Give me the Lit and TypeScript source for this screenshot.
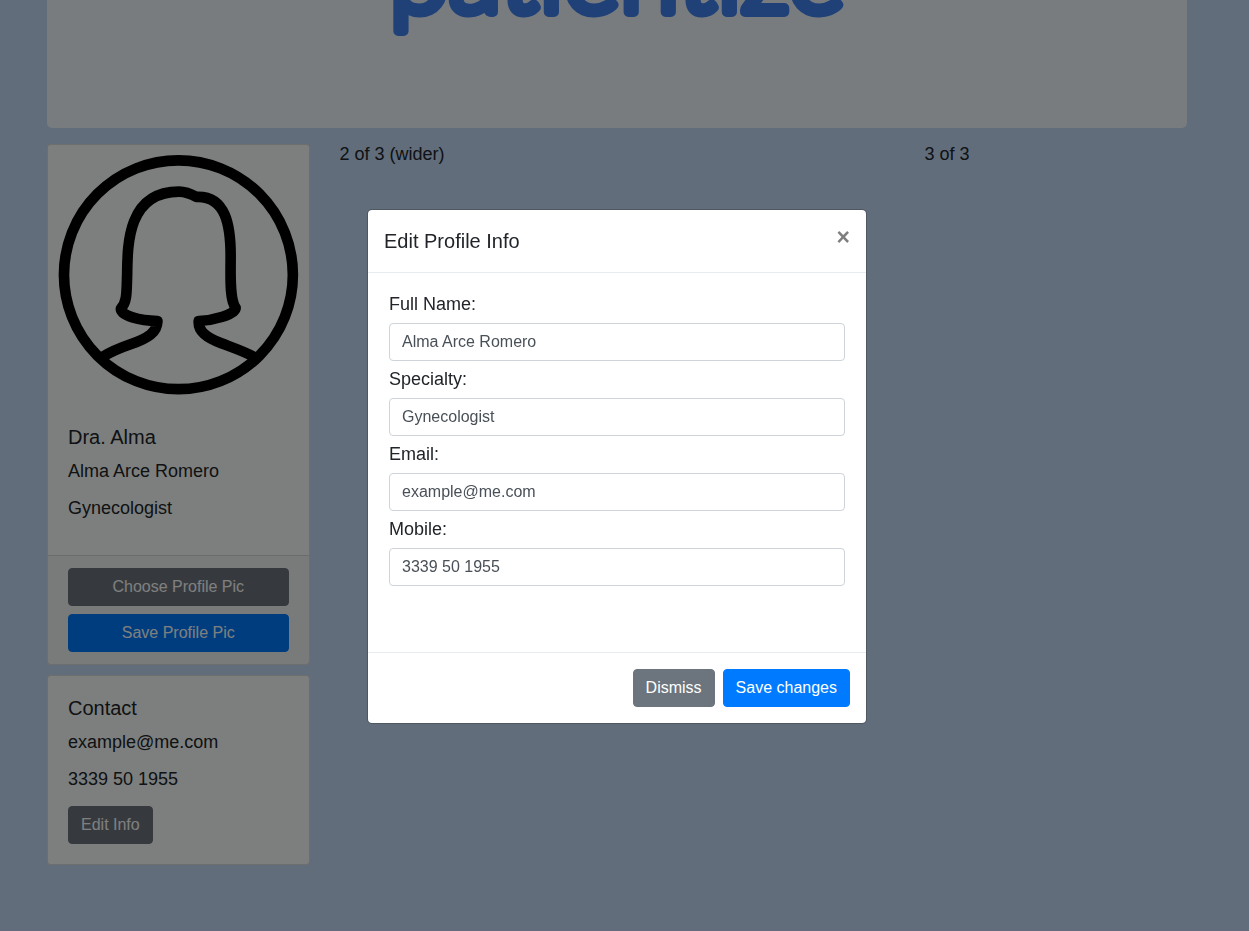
import { LitElement, html, css } from "lit";
import { customElement, state } from "lit/decorators.js";

interface Field {
  id: string;
  label: string;
  type: string;
  value: string;
}

@customElement("app-root")
export class AppRoot extends LitElement {
  static styles = css`
    :host {
      display: block;
      font-family: "Liberation Sans", Arial, sans-serif;
      font-size: 18px;
      line-height: 21px;
      color: #212529;
    }
    *,
    *::before,
    *::after {
      box-sizing: border-box;
    }
    h1,
    h5,
    p {
      margin: 0;
      font-weight: 400;
    }
    .page {
      min-height: 100vh;
      padding-right: 15px;
      overflow: hidden;
      background: #c2daf6;
    }
    .container {
      max-width: 1140px;
      margin: 0 auto;
    }
    .banner {
      padding-bottom: 100px;
      border-radius: 0 0 5px 5px;
      background: #f0f8ff;
      overflow: hidden;
    }
    .brand {
      display: flex;
      justify-content: center;
      height: 104px;
      margin-top: -76px;
    }
    .brand svg {
      width: 100%;
      height: 104px;
      overflow: visible;
    }
    .brand text {
      font-family: Lato, sans-serif;
      font-size: 108px;
      font-weight: 300;
      fill: #4082f0;
      stroke: #4082f0;
      stroke-width: 10px;
      stroke-linejoin: round;
      text-anchor: middle;
    }
    .row {
      display: flex;
      margin: 16px -15px 0;
    }
    .col {
      flex: 0 0 25%;
      padding: 0 15px;
    }
    .wide {
      flex-basis: 50%;
    }
    .card {
      margin-bottom: 10px;
      border: 1px solid rgba(0, 0, 0, 0.125);
      border-radius: 4px;
      background: #fafffc;
      background-clip: border-box;
    }
    .picture {
      display: block;
      width: 100%;
    }
    .card-body {
      padding: 20px;
    }
    .card-title {
      margin-bottom: 12px;
      font-size: 20px;
      line-height: 24px;
    }
    .card-body p {
      margin-bottom: 16px;
    }
    .card-footer {
      display: grid;
      gap: 8px;
      padding: 12px 20px;
      border-top: 1px solid rgba(0, 0, 0, 0.125);
      background: rgba(0, 0, 0, 0.03);
    }
    .btn {
      padding: 6px 12px;
      border: 1px solid transparent;
      border-radius: 4px;
      font: inherit;
      font-size: 16px;
      line-height: 24px;
      color: #fff;
      cursor: pointer;
    }
    .primary {
      border-color: #007bff;
      background: #007bff;
    }
    .secondary {
      border-color: #6c757d;
      background: #6c757d;
    }
    .backdrop {
      position: fixed;
      inset: 0;
      display: flex;
      align-items: center;
      justify-content: center;
      padding: 2px 15px 0 0;
      background: rgba(0, 0, 0, 0.5);
    }
    .modal {
      width: 100%;
      max-width: 500px;
      border: 1px solid rgba(0, 0, 0, 0.2);
      border-radius: 5px;
      background: #fff;
      background-clip: padding-box;
    }
    .modal-header {
      display: flex;
      align-items: flex-start;
      justify-content: space-between;
      padding: 16px;
      border-bottom: 1px solid #e9ecef;
    }
    .modal-title {
      font-size: 20px;
      line-height: 30px;
    }
    .close {
      margin: -16px;
      padding: 16px;
      border: 0;
      background: none;
      font: inherit;
      font-size: 23px;
      font-weight: 700;
      line-height: 23px;
      color: #000;
      opacity: 0.5;
      cursor: pointer;
    }
    .modal-body {
      display: grid;
      gap: 8px;
      padding: 21px 21px 66px;
    }
    .control {
      width: 100%;
      height: 38px;
      padding: 6px 12px;
      border: 1px solid #ced4da;
      border-radius: 4px;
      background: #fff;
      font: inherit;
      font-size: 16px;
      line-height: 24px;
      color: #495057;
    }
    .modal-footer {
      display: flex;
      justify-content: flex-end;
      gap: 8px;
      padding: 16px;
      border-top: 1px solid #e9ecef;
    }
  `;

  @state() private open = true;

  @state() private fields: Field[] = [
    { id: "name", label: "Full Name:", type: "text", value: "Alma Arce Romero" },
    { id: "specialty", label: "Specialty:", type: "text", value: "Gynecologist" },
    { id: "email", label: "Email:", type: "email", value: "example@me.com" },
    { id: "mobile", label: "Mobile:", type: "tel", value: "3339 50 1955" },
  ];

  private close = () => {
    this.open = false;
  };

  private show = () => {
    this.open = true;
  };

  private renderPicture() {
    return html`
      <svg class="picture" viewBox="24 105 783 780" role="img" aria-label="Profile picture">
        <g fill="none" stroke="#000" stroke-width="32" stroke-linejoin="round">
          <circle cx="416" cy="495" r="344" />
          <path
            d="M186 743C210 728 240 715 272 704C325 686 352 668 353 634C300 633 243 618 243 597C262 577 260 550 262 490C263 400 265 245 418 245C440 245 454 252 470 261C560 257 573 350 573 440C573 500 569 570 588 594C588 615 520 632 477 634C475 665 500 684 545 701C582 715 622 728 648 745"
          />
        </g>
      </svg>
    `;
  }

  private renderModal() {
    return html`
      <div class="backdrop">
        <form class="modal" role="dialog" aria-labelledby="title" @submit=${(e: Event) => e.preventDefault()}>
          <div class="modal-header">
            <h5 class="modal-title" id="title">Edit Profile Info</h5>
            <button class="close" type="button" aria-label="Close" @click=${this.close}>×</button>
          </div>
          <div class="modal-body">
            ${this.fields.map(
              (f) => html`
                <label for=${f.id}>${f.label}</label>
                <input class="control" id=${f.id} type=${f.type} .value=${f.value} />
              `
            )}
          </div>
          <div class="modal-footer">
            <button class="btn secondary" type="button" @click=${this.close}>Dismiss</button>
            <button class="btn primary" type="submit">Save changes</button>
          </div>
        </form>
      </div>
    `;
  }

  render() {
    return html`
      <div class="page">
        <main class="container">
          <header class="banner">
            <h1 class="brand">
              <svg><text x="50%" y="88">patientize</text></svg>
            </h1>
          </header>
          <div class="row">
            <div class="col">
              <section class="card">
                ${this.renderPicture()}
                <div class="card-body">
                  <h5 class="card-title">Dra. Alma</h5>
                  <p>Alma Arce Romero</p>
                  <p>Gynecologist</p>
                </div>
                <div class="card-footer">
                  <button class="btn secondary" type="button">Choose Profile Pic</button>
                  <button class="btn primary" type="button">Save Profile Pic</button>
                </div>
              </section>
              <section class="card">
                <div class="card-body">
                  <h5 class="card-title">Contact</h5>
                  <p>example@me.com</p>
                  <p>3339 50 1955</p>
                  <button class="btn secondary" type="button" @click=${this.show}>Edit Info</button>
                </div>
              </section>
            </div>
            <div class="col wide">2 of 3 (wider)</div>
            <div class="col">3 of 3</div>
          </div>
        </main>
      </div>
      ${this.open ? this.renderModal() : null}
    `;
  }
}
